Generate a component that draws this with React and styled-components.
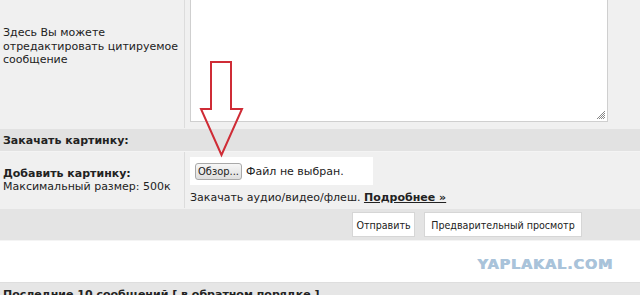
import React from "react";
import styled, { createGlobalStyle } from "styled-components";

const Global = createGlobalStyle`
  html, body { margin: 0; padding: 0; background: #fff; }
  body {
    font-family: "DejaVu Sans", Verdana, sans-serif;
    font-size: 11px;
    color: #222;
    overflow: hidden;
  }
`;

const Page = styled.div`
  position: relative;
  width: 640px;
`;

const Row = styled.div`
  display: grid;
  grid-template-columns: 185px 1fr;
  height: ${(p) => p.$h}px;
  background: #f0f0f0;
  border-bottom: 1px solid ${(p) => p.$line || "#f6f6f6"};
  box-sizing: border-box;
`;

const LeftCell = styled.div`
  border-right: 1px solid #dcdcdc;
  padding: ${(p) => (p.$top ? `${p.$top}px 3px 0` : "0 3px")};
  display: flex;
  flex-direction: column;
  justify-content: ${(p) => (p.$top ? "flex-start" : "center")};
  line-height: 13.5px;
`;

const RightCell = styled.div`
  padding: ${(p) => p.$pad};
  display: flex;
  flex-direction: column;
`;

const Textarea = styled.div`
  width: 418px;
  height: 122px;
  box-sizing: border-box;
  background: #fff;
  border: 1px solid #cfcfcf;
  border-top: none;
  position: relative;
`;

const Grip = styled.svg`
  position: absolute;
  right: 1px;
  bottom: 1px;
`;

const Header = styled.div`
  height: ${(p) => p.$h}px;
  background: ${(p) => p.$bg};
  border-bottom: 1px solid #f4f4f4;
  box-sizing: border-box;
  padding: ${(p) => p.$pt}px 3px 0;
  font-weight: bold;
  white-space: nowrap;
`;

const Bold = styled.span`
  font-weight: bold;
`;

const FileBox = styled.div`
  width: 183px;
  height: 28px;
  box-sizing: border-box;
  background: #fff;
  display: flex;
  align-items: center;
  padding-left: 5px;
  gap: 4px;
`;

const BrowseButton = styled.div`
  height: 17px;
  width: 47px;
  box-sizing: border-box;
  border: 1px solid #a9a9a9;
  border-radius: 3px;
  background: linear-gradient(#f6f6f6, #dedede);
  display: flex;
  align-items: center;
  justify-content: center;
  font-family: "DejaVu Sans Condensed", "DejaVu Sans", sans-serif;
  font-size: 11px;
  color: #222;
`;

const Note = styled.div`
  margin-top: 6px;
  white-space: nowrap;
`;

const MoreLink = styled.a`
  font-weight: bold;
  color: #222;
  text-decoration: underline;
`;

const ButtonBar = styled.div`
  height: 32px;
  box-sizing: border-box;
  background: #e4e4e4;
  border-bottom: 1px solid #f4f4f4;
  display: flex;
  align-items: flex-start;
  padding: 3px 0 0 352px;
  gap: 9px;
`;

const Button = styled.div`
  height: 25px;
  width: ${(p) => p.$w}px;
  box-sizing: border-box;
  background: #fff;
  border: 1px solid #d6d6d6;
  display: flex;
  align-items: center;
  justify-content: center;
  font-family: "DejaVu Sans Condensed", "DejaVu Sans", sans-serif;
  font-size: 10.6px;
  color: #222;
  white-space: nowrap;
`;

const WhiteRow = styled.div`
  height: 42px;
  box-sizing: border-box;
  background: #fff;
  border-bottom: 1px solid #dedede;
  display: flex;
  justify-content: flex-end;
  padding: 16px 27px 0 0;
`;

const Watermark = styled.div`
  font-family: "DejaVu Sans", sans-serif;
  font-weight: bold;
  font-size: 14.5px;
  line-height: 14px;
  letter-spacing: 0.8px;
  color: #a9c3da;
  text-shadow: 0.7px 0 0 #a9c3da;
`;

const Arrow = styled.svg`
  position: absolute;
  left: 0;
  top: 0;
  pointer-events: none;
`;

export default function App() {
  return (
    <>
      <Global />
      <Page>
        <Row $h={129} $line="#f0f0f0">
          <LeftCell $top={26}>
            <div>Здесь Вы можете</div>
            <div>отредактировать цитируемое</div>
            <div>сообщение</div>
          </LeftCell>
          <RightCell $pad="0 0 0 5px">
            <Textarea>
              <Grip width="10" height="10" viewBox="0 0 10 10">
                <path
                  d="M9 1 L1 9 M9 3 L3 9 M9 5 L5 9 M9 7 L7 9"
                  stroke="#888"
                  strokeWidth="1"
                />
              </Grip>
            </Textarea>
          </RightCell>
        </Row>
        <Header $h={23} $bg="#e2e2e2" $pt={5}>
          Закачать картинку:
        </Header>
        <Row $h={57} $line="#f0f0f0">
          <LeftCell>
            <Bold>Добавить картинку:</Bold>
            <div>Максимальный размер: 500к</div>
          </LeftCell>
          <RightCell $pad="5px 0 0 5px">
            <FileBox>
              <BrowseButton>Обзор...</BrowseButton>
              <span>Файл не выбран.</span>
            </FileBox>
            <Note>
              Закачать аудио/видео/флеш. <MoreLink>Подробнее »</MoreLink>
            </Note>
          </RightCell>
        </Row>
        <ButtonBar>
          <Button $w={63}>Отправить</Button>
          <Button $w={158}>Предварительный просмотр</Button>
        </ButtonBar>
        <WhiteRow>
          <Watermark>YAPLAKAL.COM</Watermark>
        </WhiteRow>
        <Header $h={30} $bg="#e6e6e6" $pt={5}>
          Последние 10 сообщений [ в обратном порядке ]
        </Header>
        <Arrow width="640" height="295" viewBox="0 0 640 295">
          <polygon
            points="211,62 231,62 231,109 242,109 221.5,155 201,109 211,109"
            fill="none"
            stroke="#cf2c36"
            strokeWidth="2"
            strokeLinejoin="miter"
          />
        </Arrow>
      </Page>
    </>
  );
}
